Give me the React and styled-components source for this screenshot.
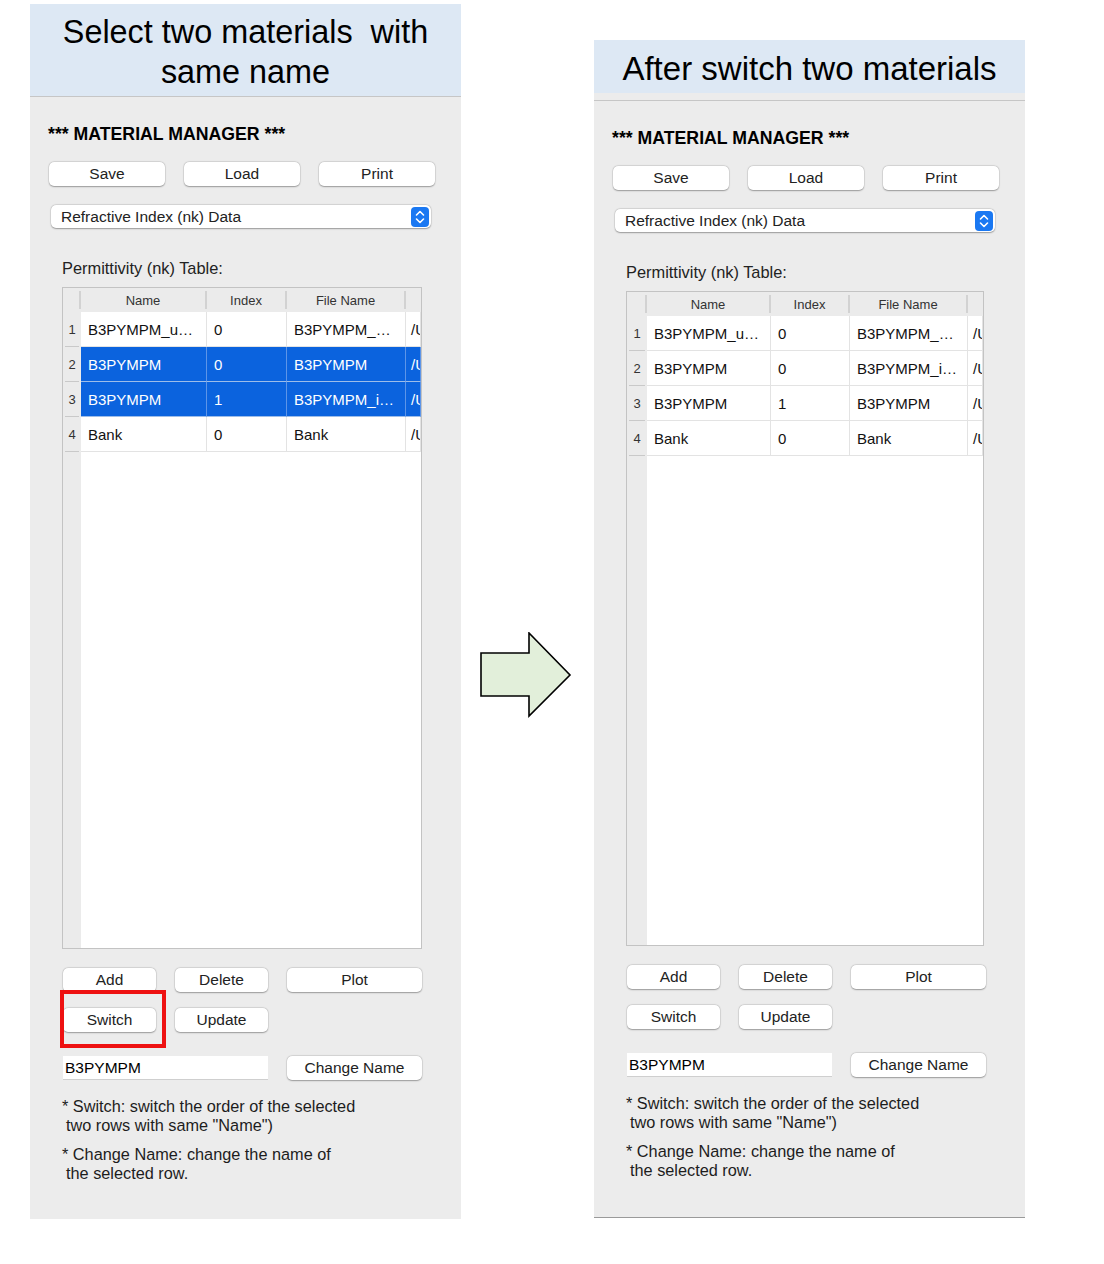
import React from 'react';
import styled, { createGlobalStyle } from 'styled-components';

const GlobalStyle = createGlobalStyle`
  body {
    margin: 0;
    background: #ffffff;
    font-family: "Liberation Sans", Arial, sans-serif;
    color: #1d1d1d;
  }
`;

const before = [
  { n: 1, name: 'B3PYMPM_u…', index: '0', file: 'B3PYMPM_…' },
  { n: 2, name: 'B3PYMPM', index: '0', file: 'B3PYMPM', selected: true },
  { n: 3, name: 'B3PYMPM', index: '1', file: 'B3PYMPM_i…', selected: true },
  { n: 4, name: 'Bank', index: '0', file: 'Bank' },
];

const after = [
  { n: 1, name: 'B3PYMPM_u…', index: '0', file: 'B3PYMPM_…' },
  { n: 2, name: 'B3PYMPM', index: '0', file: 'B3PYMPM_i…' },
  { n: 3, name: 'B3PYMPM', index: '1', file: 'B3PYMPM' },
  { n: 4, name: 'Bank', index: '0', file: 'Bank' },
];

const Stepper = () => (
  <svg width="18" height="20" viewBox="0 0 18 20">
    <rect x="0" y="0" width="18" height="20" rx="4" fill="#1a78f2" />
    <path d="M5.5 8 L9 4.5 L12.5 8" fill="none" stroke="#fff" strokeWidth="1.6" strokeLinecap="round" strokeLinejoin="round" />
    <path d="M5.5 12 L9 15.5 L12.5 12" fill="none" stroke="#fff" strokeWidth="1.6" strokeLinecap="round" strokeLinejoin="round" />
  </svg>
);

const Arrow = () => (
  <svg width="94" height="88" viewBox="0 0 94 88">
    <polygon
      points="1,21 49,21 49,1 90,43 49,84 49,64 1,64"
      fill="#e2efda"
      stroke="#000"
      strokeWidth="1.6"
      strokeLinejoin="miter"
    />
  </svg>
);

const MaterialTable = ({ rows, cols, height, width }) => (
  <Table $height={height} $width={width} $num={cols[0]}>
    <HeadRow $cols={cols}>
      <HeadCell />
      <HeadCell>Name</HeadCell>
      <HeadCell>Index</HeadCell>
      <HeadCell>File Name</HeadCell>
      <HeadCell $last />
    </HeadRow>
    {rows.map((r) => (
      <Row key={r.n} $cols={cols} $selected={r.selected}>
        <NumCell>{r.n}</NumCell>
        <Cell $selected={r.selected}>{r.name}</Cell>
        <Cell $selected={r.selected}>{r.index}</Cell>
        <Cell $selected={r.selected}>{r.file}</Cell>
        <Cell $selected={r.selected} $path>/U</Cell>
      </Row>
    ))}
  </Table>
);

const ManagerPanel = ({ title, titleSize, bannerHeight, dividerGap, top, height, tableHeight, tableWidth, cols, rows, highlight, bottomLine }) => (
  <Panel $top={top} $height={height} $bottomLine={bottomLine}>
    <Banner $height={bannerHeight} $size={titleSize}>
      {title.map((line) => (
        <BannerLine key={line}>{line}</BannerLine>
      ))}
    </Banner>
    <Divider $gap={dividerGap} />
    <Body>
      <Heading>*** MATERIAL MANAGER ***</Heading>
      <TopButtons>
        <Button>Save</Button>
        <Button>Load</Button>
        <Button>Print</Button>
      </TopButtons>
      <Select>
        <span>Refractive Index (nk) Data</span>
        <Stepper />
      </Select>
      <TableLabel>Permittivity (nk) Table:</TableLabel>
      <MaterialTable rows={rows} cols={cols} height={tableHeight} width={tableWidth} />
      <ActionGrid>
        <Button>Add</Button>
        <Button>Delete</Button>
        <Button>Plot</Button>
        <SwitchWrap>
          <Button>Switch</Button>
          {highlight && <Highlight />}
        </SwitchWrap>
        <Button>Update</Button>
      </ActionGrid>
      <RenameRow>
        <NameInput>B3PYMPM</NameInput>
        <Button>Change Name</Button>
      </RenameRow>
      <Note>
        <NoteLine>* Switch: switch the order of the selected</NoteLine>
        <NoteLine $indent>two rows with same "Name")</NoteLine>
      </Note>
      <Note>
        <NoteLine>* Change Name: change the name of</NoteLine>
        <NoteLine $indent>the selected row.</NoteLine>
      </Note>
    </Body>
  </Panel>
);

export default function App() {
  return (
    <>
      <GlobalStyle />
      <Page>
        <ManagerPanel
          title={['Select two materials  with', 'same name']}
          titleSize={32.4}
          bannerHeight={92}
          dividerGap={0}
          top={4}
          height={1215}
          tableHeight={662}
          tableWidth={360}
          cols={[18, 126, 80, 119]}
          rows={before}
          highlight
        />
        <ArrowBox>
          <Arrow />
        </ArrowBox>
        <ManagerPanel
          title={['After switch two materials']}
          titleSize={33}
          bannerHeight={53}
          dividerGap={7}
          top={40}
          height={1178}
          tableHeight={655}
          tableWidth={358}
          cols={[20, 124, 79, 118]}
          rows={after}
          bottomLine
        />
      </Page>
    </>
  );
}

const Page = styled.div`
  display: flex;
  align-items: flex-start;
  width: 1104px;
  padding-left: 30px;
  box-sizing: border-box;
`;

const Panel = styled.div`
  width: 431px;
  height: ${(p) => p.$height}px;
  margin-top: ${(p) => p.$top}px;
  background: #ececec;
  display: flex;
  flex-direction: column;
  box-sizing: border-box;
  border-bottom: ${(p) => (p.$bottomLine ? '1px solid #9a9a9a' : 'none')};
`;

const Banner = styled.div`
  height: ${(p) => p.$height}px;
  background: #dde8f4;
  display: flex;
  flex-direction: column;
  align-items: center;
  justify-content: center;
  font-size: ${(p) => p.$size}px;
  line-height: 40px;
  color: #000;
  padding-top: 4px;
  box-sizing: border-box;
`;

const BannerLine = styled.div`
  white-space: pre;
`;

const Divider = styled.div`
  margin-top: ${(p) => p.$gap}px;
  height: 1px;
  background: #c6c6c6;
`;

const Body = styled.div`
  display: flex;
  flex-direction: column;
  align-items: flex-start;
`;

const Heading = styled.div`
  margin: 27px 0 0 18px;
  font-size: 17.7px;
  font-weight: bold;
  line-height: 20px;
  color: #000;
`;

const TopButtons = styled.div`
  margin: 18px 0 0 19px;
  width: 386px;
  display: grid;
  grid-template-columns: repeat(3, 1fr);
  column-gap: 19px;
`;

const Button = styled.div`
  height: 24px;
  background: #fff;
  border-radius: 5px;
  box-shadow: 0 0.5px 1.5px rgba(0, 0, 0, 0.32), 0 0 0 0.5px rgba(0, 0, 0, 0.08);
  display: flex;
  align-items: center;
  justify-content: center;
  font-size: 15.5px;
  color: #222;
`;

const Select = styled.div`
  margin: 19px 0 0 21px;
  width: 380px;
  height: 23px;
  box-sizing: border-box;
  background: #fff;
  border-radius: 5px;
  box-shadow: 0 0.5px 1.5px rgba(0, 0, 0, 0.32), 0 0 0 0.5px rgba(0, 0, 0, 0.08);
  display: flex;
  align-items: center;
  justify-content: space-between;
  padding: 0 2px 0 10px;
  font-size: 15.5px;
  color: #222;
`;

const TableLabel = styled.div`
  margin: 30px 0 0 32px;
  line-height: 20px;
  font-size: 16.4px;
  color: #222;
`;

const Table = styled.div`
  margin: 9px 0 0 32px;
  width: ${(p) => p.$width}px;
  height: ${(p) => p.$height}px;
  box-sizing: border-box;
  border: 1px solid #c3c3c3;
  background: linear-gradient(to right, #ebebeb ${(p) => p.$num}px, #ffffff ${(p) => p.$num}px);
  overflow: hidden;
`;

const HeadRow = styled.div`
  display: grid;
  grid-template-columns: ${(p) => p.$cols.map((c) => `${c}px`).join(' ')} 1fr;
  height: 24px;
  background: #ebebeb;
`;

const HeadCell = styled.div`
  display: flex;
  align-items: center;
  justify-content: center;
  font-size: 13px;
  color: #333;
  border-right: ${(p) => (p.$last ? 'none' : '2px solid #d2d2d2')};
  margin: 3px 0;
  white-space: nowrap;
`;

const Row = styled.div`
  display: grid;
  grid-template-columns: ${(p) => p.$cols.map((c) => `${c}px`).join(' ')} 1fr;
  height: 35px;
`;

const NumCell = styled.div`
  position: relative;
  display: flex;
  align-items: center;
  justify-content: center;
  font-size: 13px;
  color: #333;
  background: #ebebeb;

  &::after {
    content: '';
    position: absolute;
    left: 2px;
    right: 2px;
    bottom: 0;
    height: 1.5px;
    background: #c9c9c9;
  }
`;

const Cell = styled.div`
  display: flex;
  align-items: center;
  padding-left: ${(p) => (p.$path ? 5 : 7)}px;
  font-size: 15px;
  white-space: nowrap;
  overflow: hidden;
  color: ${(p) => (p.$selected ? '#fff' : '#111')};
  background: ${(p) => (p.$selected ? '#0b63de' : '#fff')};
  border-right: 1px solid ${(p) => (p.$selected ? '#5d95e8' : '#e3e3e3')};
  border-bottom: 1px solid ${(p) => (p.$selected ? '#9dbde9' : '#e3e3e3')};
  box-sizing: border-box;
`;

const ActionGrid = styled.div`
  margin: 19px 0 0 33px;
  width: 359px;
  display: grid;
  grid-template-columns: 93px 93px 1fr;
  column-gap: 19px;
  row-gap: 16px;
`;

const SwitchWrap = styled.div`
  position: relative;
`;

const Highlight = styled.div`
  position: absolute;
  left: -3px;
  top: -18px;
  width: 106px;
  height: 58px;
  box-sizing: border-box;
  border: 4px solid #ee1111;
  pointer-events: none;
`;

const RenameRow = styled.div`
  margin: 24px 0 0 33px;
  width: 359px;
  display: grid;
  grid-template-columns: 205px 1fr;
  column-gap: 19px;
`;

const NameInput = styled.div`
  height: 23px;
  background: #fff;
  box-shadow: 0 1px 0 #cfcfcf;
  display: flex;
  align-items: center;
  padding-left: 2px;
  font-size: 15.5px;
  color: #000;
`;

const Note = styled.div`
  margin: 17px 0 0 32px;
  font-size: 16.3px;
  line-height: 19px;
  color: #1d1d1d;

  & + & {
    margin-top: 10px;
  }
`;

const NoteLine = styled.div`
  padding-left: ${(p) => (p.$indent ? 4 : 0)}px;
`;

const ArrowBox = styled.div`
  margin: 632px 0 0 19px;
  width: 94px;
  margin-right: 20px;
  display: flex;
`;
